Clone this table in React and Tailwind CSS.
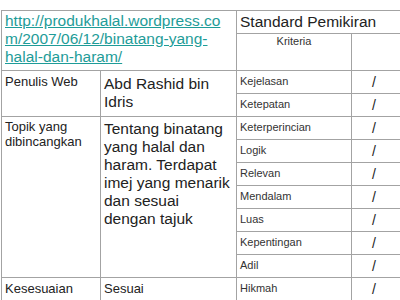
import React from 'react';

const criteria = [
    'Kejelasan',
    'Ketepatan',
    'Keterperincian',
    'Logik',
    'Relevan',
    'Mendalam',
    'Luas',
    'Kepentingan',
    'Adil',
];

export default function App() {
    return (
        <div className="w-[400px] h-[300px] overflow-hidden bg-white pt-[10px] pl-px text-[#222] [font-family:'Liberation_Sans',Arial,sans-serif]">
            <div className="grid grid-cols-[98px_135px_114px_80px] grid-rows-[22px_36px_repeat(10,22px)] gap-px p-px bg-[#a3a3a3] w-[434px]">
                {/* url */}
                <div className="col-span-2 row-span-2 bg-white pl-[3px] pt-px text-[15.5px] leading-[18px]">
                    <a href="#" className="text-[#1e9c98] underline">
                        http://produkhalal.wordpress.co<br />
                        m/2007/06/12/binatang-yang-<br />
                        halal-dan-haram/
                    </a>
                </div>
                <div className="col-span-2 bg-white pl-[3px] flex items-center text-[15.5px]">
                    Standard Pemikiran
                </div>
                <div className="bg-white pt-px text-center text-[11px] leading-[13px] text-[#333]">Kriteria</div>
                <div className="bg-white" />

                {/* penulis */}
                <div className="row-span-2 bg-white pl-[3px] pt-[3px] text-[13px] leading-[15px]">Penulis Web</div>
                <div className="row-span-2 bg-white pl-[3px] pt-[4px] text-[15.5px] leading-[18px]">
                    Abd Rashid bin<br />Idris
                </div>
                <Crit label={criteria[0]} />
                <Slash />
                <Crit label={criteria[1]} />
                <Slash />

                {/* topik */}
                <div className="row-span-7 bg-white pl-[3px] pt-[2px] text-[13px] leading-[15px]">
                    Topik yang<br />dibincangkan
                </div>
                <div className="row-span-7 bg-white pl-[3px] pt-[3px] text-[15.5px] leading-[18px]">
                    Tentang binatang<br />
                    yang halal dan<br />
                    haram. Terdapat<br />
                    imej yang menarik<br />
                    dan sesuai<br />
                    dengan tajuk
                </div>
                {criteria.slice(2).map((c) => (
                    <React.Fragment key={c}>
                        <Crit label={c} />
                        <Slash />
                    </React.Fragment>
                ))}

                {/* kesesuaian */}
                <div className="bg-white pl-[3px] flex items-center text-[13px]">Kesesuaian</div>
                <div className="bg-white pl-[3px] flex items-center text-[13px]">Sesuai</div>
                <Crit label="Hikmah" />
                <Slash />
            </div>
        </div>
    );
}

function Crit({ label }) {
    return (
        <div className="bg-white pl-[3px] pb-px flex items-center text-[11px] text-[#333]">{label}</div>
    );
}

function Slash() {
    return (
        <div className="bg-white pl-[20px] flex items-center text-[14px] text-[#222]">/</div>
    );
}
